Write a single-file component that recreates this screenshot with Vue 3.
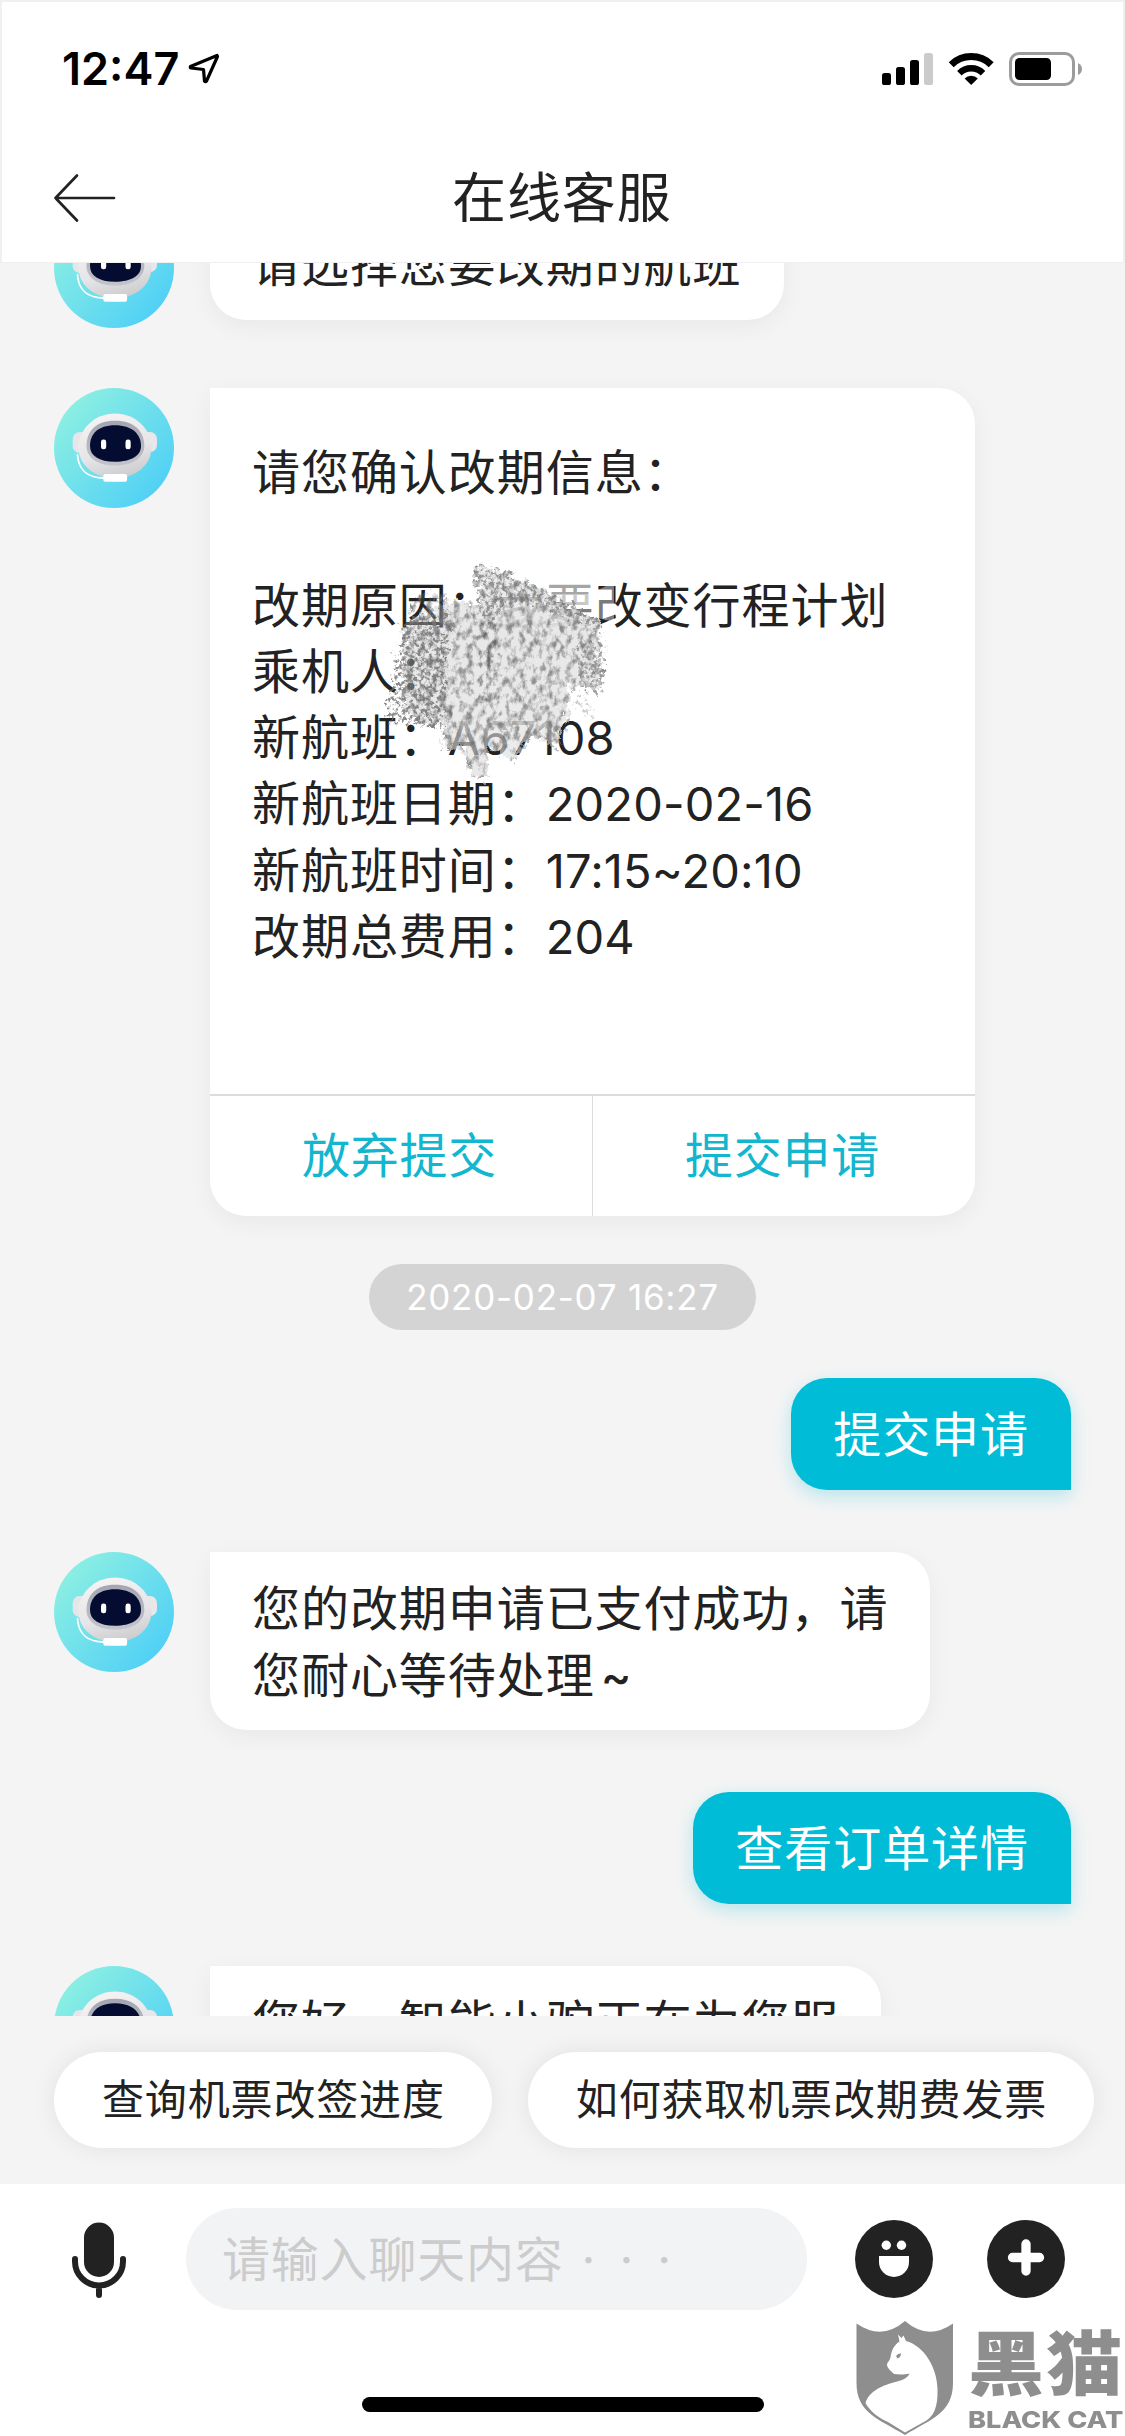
<script setup>
import { h } from 'vue'

const fields = [
  ['改期原因：我要改变行程计划', ''],
  ['乘机人：', ''],
  ['新航班：', 'A67108'],
  ['新航班日期：', '2020-02-16'],
  ['新航班时间：', '17:15~20:10'],
  ['改期总费用：', '204']
]
const quick = ['查询机票改签进度', '如何获取机票改期费发票']

const Avatar = () =>
  h('svg', { width: 120, height: 120, viewBox: '0 0 120 120', style: 'display:block;flex:none' }, [
    h('circle', { cx: 60, cy: 60, r: 60, fill: 'url(#sky)' }),
    h('rect', { x: 18.7, y: 44, width: 16, height: 21, rx: 7, fill: '#e6e6ea' }),
    h('rect', { x: 86.7, y: 44, width: 16.3, height: 20, rx: 7, fill: '#e9e7e9' }),
    h('path', {
      d: 'M61 25.5C82 25.5 97.5 42 97.5 59C97.5 77 82 90 61 90C40 90 24.5 77 24.5 59C24.5 42 40 25.5 61 25.5Z',
      fill: 'url(#shell)'
    }),
    h('path', {
      d: 'M61 32.7C80 32.7 90.3 43 90.3 58C90.3 70 78 77.5 61 77.5C44 77.5 32.5 70 32.5 58C32.5 43 42 32.7 61 32.7Z',
      fill: 'url(#rim)'
    }),
    h('path', {
      d: 'M61 37.3C78 37.3 87 46 87 58C87 68 77 73.7 61 73.7C45 73.7 36 68 36 58C36 46 44 37.3 61 37.3Z',
      fill: '#040d31'
    }),
    h('rect', { x: 47, y: 51.5, width: 5.2, height: 9.8, rx: 2.4, fill: '#fff' }),
    h('rect', { x: 71.5, y: 51.5, width: 5.2, height: 9.8, rx: 2.4, fill: '#fff' }),
    h('path', { d: 'M23.5 67C24.5 82 34 90 50 90', fill: 'none', stroke: '#fff', 'stroke-width': 1.8, 'stroke-linecap': 'round' }),
    h('rect', { x: 49.3, y: 86, width: 23.8, height: 7.7, rx: 2, fill: '#fff' })
  ])
</script>

<template>
  <div class="screen">
    <svg class="defs" width="0" height="0">
      <defs>
        <linearGradient id="sky" x1="0.1" y1="0.15" x2="0.9" y2="0.85">
          <stop offset="0" stop-color="#8cefe2" />
          <stop offset="1" stop-color="#50d0f6" />
        </linearGradient>
        <linearGradient id="shell" x1="0.3" y1="0" x2="0.6" y2="1">
          <stop offset="0" stop-color="#f6f3f3" />
          <stop offset="0.6" stop-color="#e6e5e7" />
          <stop offset="1" stop-color="#cccbce" />
        </linearGradient>
        <linearGradient id="rim" x1="0" y1="0" x2="0" y2="1">
          <stop offset="0" stop-color="#a3a6b2" />
          <stop offset="1" stop-color="#c3c4cb" />
        </linearGradient>
      </defs>
    </svg>

    <header class="top">
      <div class="status">
        <span class="clock">12:47</span>
        <svg class="loc" width="34" height="34" viewBox="0 0 34 34">
          <path d="M30 4.500L3.500 15.500Q2.800 16.500 4 17L16.500 18.500L17.500 30Q18.500 31.500 19.500 30L30.500 5.500Z" fill="none" stroke="#000" stroke-width="3.200" stroke-linejoin="round" />
        </svg>
        <svg class="signals" width="204" height="40" viewBox="0 0 204 40">
          <rect x="0" y="23" width="9" height="12" rx="2.600" />
          <rect x="14" y="17" width="9" height="18" rx="2.600" />
          <rect x="28" y="10" width="9" height="25" rx="2.600" />
          <rect x="42" y="3" width="9" height="32" rx="2.600" fill="#cbcbcb" />
          <g transform="translate(89.200 35)">
            <path d="M0 0L-6.600 -6.600A9.300 9.300 0 0 1 6.600 -6.600Z" />
            <path d="M-11.800 -11.800A16.700 16.700 0 0 1 11.800 -11.800" fill="none" stroke="#000" stroke-width="6.400" />
            <path d="M-20 -20.300A28.700 28.700 0 0 1 20 -20.300" fill="none" stroke="#000" stroke-width="7" />
          </g>
          <rect x="128.500" y="3.500" width="63" height="31" rx="8.500" fill="none" stroke="#9c9c9c" stroke-width="3" />
          <rect x="133" y="8" width="36" height="22" rx="4.500" />
          <path d="M196 13Q200 15 200 19Q200 23 196 25Z" fill="#9c9c9c" />
        </svg>
      </div>
      <div class="nav">
        <svg width="64" height="50" viewBox="0 0 64 50">
          <path d="M24 2.500L2.500 25L24 47.500M2.500 25H61" fill="none" stroke="#222" stroke-width="2.700" stroke-linecap="round" stroke-linejoin="round" />
        </svg>
        <h1>在线客服</h1>
      </div>
    </header>

    <main class="chat">
      <div class="thread">
        <div class="row">
          <Avatar />
          <div class="bubble">请选择您要改期的航班</div>
        </div>

        <div class="row">
          <Avatar />
          <div class="card">
            <div class="info">
              <p>请您确认改期信息：</p>
              <p>&nbsp;</p>
              <p v-for="f in fields" :key="f[0]">{{ f[0] }}<span class="latin">{{ f[1] }}</span></p>
              <svg class="scribble" width="280" height="260" viewBox="0 0 280 260">
                <defs>
                  <filter id="rough" x="-10%" y="-10%" width="120%" height="120%" color-interpolation-filters="sRGB">
                    <feTurbulence type="fractalNoise" baseFrequency="0.17" numOctaves="4" seed="4" result="n" />
                    <feDisplacementMap in="SourceGraphic" in2="n" scale="20" xChannelSelector="R" yChannelSelector="G" />
                  </filter>
                  <filter id="grain" x="0" y="0" width="100%" height="100%" color-interpolation-filters="sRGB">
                    <feTurbulence type="fractalNoise" baseFrequency="0.15 0.11" numOctaves="5" seed="9" />
                    <feColorMatrix values="0 0 0 0 0.42  0 0 0 0 0.42  0 0 0 0 0.42  3 0 0 0 -1.32" result="g" />
                    <feComposite in="g" in2="SourceGraphic" operator="in" />
                  </filter>
                  <filter id="coarse" x="0" y="0" width="100%" height="100%" color-interpolation-filters="sRGB">
                    <feTurbulence type="fractalNoise" baseFrequency="0.26" numOctaves="4" seed="21" />
                    <feColorMatrix values="0 0 0 0 0.46  0 0 0 0 0.46  0 0 0 0 0.46  5 0 0 0 -2.3" result="g" />
                    <feComposite in="g" in2="SourceGraphic" operator="in" />
                  </filter>
                  <linearGradient id="fade" x1="0" y1="0" x2="0" y2="1">
                    <stop offset="0" stop-color="#e4e4e4" stop-opacity="0.6" />
                    <stop offset="0.3" stop-color="#e6e6e6" stop-opacity="0.95" />
                    <stop offset="0.68" stop-color="#e8e8e8" stop-opacity="0.95" />
                    <stop offset="0.8" stop-color="#e0e0e0" stop-opacity="0.6" />
                    <stop offset="1" stop-color="#d8d8d8" stop-opacity="0.6" />
                  </linearGradient>
                </defs>
                <path d="M106 36L172 40L232 42L236 66L214 66L172 54L120 56Z" fill="#fff" fill-opacity="0.6" />
                <path d="M172 54H230L254 42L254 82L205 70Z" fill="#fff" fill-opacity="0.4" />
                <g filter="url(#rough)">
                  <path d="M88 60L122 66L114 30L122 24L172 44L205 64L246 84L234 96L246 104L236 118L244 128L240 150L212 146L208 174L196 206L172 196L152 222L128 206L126 240L112 236L102 206L82 210L88 120Z" fill="url(#fade)" />
                  <path d="M44 82L90 62L88 184L62 186L42 166Z" fill="#bdbdbd" fill-opacity="0.35" />
                </g>
                <g filter="url(#grain)">
                  <g filter="url(#rough)">
                    <path d="M88 60L122 66L114 30L122 24L172 44L205 64L246 84L234 96L246 104L236 118L244 128L240 150L212 146L208 174L196 206L172 196L152 222L128 206L126 240L112 236L102 206L82 210L88 120Z" fill-opacity="0.75" />
                    <path d="M44 84L58 52L90 58L90 184L62 186L42 165Z" fill-opacity="0.8" />
                    <path d="M118 60L136 60L134 170L116 160Z" />
                  </g>
                </g>
                <g filter="url(#coarse)">
                  <g filter="url(#rough)">
                    <path d="M42 84L90 68L86 120L84 188L60 186L24 180Z" fill-opacity="0.85" />
                    <path d="M114 26L127 24L187 50L246 86L242 94L190 70L150 60L128 88L118 70Z" fill-opacity="0.7" />
                    <path d="M216 100L248 104L240 156L222 148Z" fill-opacity="0.65" />
                    <path d="M212 160L222 155L238 182L230 182Z" fill-opacity="0.35" />
                    <path d="M182 194L200 190L200 212L190 206Z" fill-opacity="0.5" />
                  </g>
                </g>
              </svg>
            </div>
            <div class="actions">
              <span>放弃提交</span>
              <span>提交申请</span>
            </div>
          </div>
        </div>

        <div class="stamp">2020-02-07 16:27</div>

        <div class="bubble mine first">提交申请</div>

        <div class="row">
          <Avatar />
          <div class="bubble two">您的改期申请已支付成功，请<br />您耐心等待处理<i class="wave">~</i></div>
        </div>

        <div class="bubble mine">查看订单详情</div>

        <div class="row">
          <Avatar />
          <div class="bubble">您好，智能小驼正在为您服</div>
        </div>
      </div>
    </main>

    <div class="quick">
      <span v-for="q in quick" :key="q">{{ q }}</span>
    </div>

    <footer class="bar">
      <div class="controls">
        <svg class="mic" width="54" height="78" viewBox="0 0 54 78">
          <rect x="12" y="2.500" width="30" height="54.500" rx="15" fill="#222" />
          <path d="M3 39V41.500A24 24 0 0 0 51 41.500V39M27 66V75" fill="none" stroke="#222" stroke-width="6" stroke-linecap="round" />
        </svg>
        <div class="field">请输入聊天内容<span class="dots">···</span></div>
        <svg class="face" width="78" height="78" viewBox="0 0 78 78">
          <circle cx="39" cy="39" r="39" fill="#222" />
          <circle cx="31.300" cy="25.300" r="4.700" fill="#fff" />
          <circle cx="46.500" cy="25.300" r="4.700" fill="#fff" />
          <path d="M24 36H54V42A15 15 0 0 1 24 42Z" fill="#fff" />
        </svg>
        <svg width="78" height="78" viewBox="0 0 78 78">
          <circle cx="39" cy="39" r="39" fill="#222" />
          <path d="M39 24V51M25.500 37.500H52.500" stroke="#fff" stroke-width="9.300" stroke-linecap="round" />
        </svg>
      </div>
      <div class="home"></div>

      <div class="mark">
        <svg width="98" height="115" viewBox="0 0 98 115">
          <path d="M0.500 2.500Q26 20 49 0Q72 20 97 2.500V62C97 92 75 98 49 114C23 98 0.500 92 0.500 62Z" fill="#8f8e8e" />
          <path d="M42 13.500L45.500 17L47.500 14.500L50 20C68 25 81 46 81.500 68C82 86 78 97 66 102L49 111.500L32 101C22 97 13 89 9.500 82C13 70 27 64 41 60.500C49 58.500 52 56 53.500 52.500C47 54 42 53.500 38 53C35 50 31.500 47.500 31 44C31 41 34 40 34.500 36C35.500 29 38.500 23.500 43.500 20.500Z" fill="#fff" />
          <path d="M40 35Q42 32 45 32.500Q45 36 41.500 37.500Z" fill="#8f8e8e" />
        </svg>
        <div class="words">
          <b class="cn">黑猫</b>
          <b class="en">BLACK CAT</b>
        </div>
      </div>
    </footer>
  </div>
</template>

<style>
body {
  margin: 0;
  background: #fff;
}
</style>

<style scoped>
.screen {
  width: 1125px;
  height: 2436px;
  display: flex;
  flex-direction: column;
  overflow: hidden;
  background: #f4f4f4;
  color: #222;
  font-family: Inter, "Noto Sans CJK SC", sans-serif;
}
.defs {
  position: absolute;
}
.top {
  flex: none;
  height: 263px;
  box-sizing: border-box;
  background: #fff;
  border: 2px solid #f0f0f0;
  border-bottom: 1px solid #f0f0f0;
}
.status {
  height: 131px;
  display: flex;
  align-items: flex-start;
  box-sizing: border-box;
  padding: 40px 41px 0 60px;
}
.clock {
  font-size: 45px;
  line-height: 54px;
  font-weight: 600;
  width: 117px;
  color: #000;
  white-space: nowrap;
}
.loc {
  margin: 9px 0 0 8px;
}
.signals {
  margin: 8px -4px 0 auto;
}
.nav {
  height: 130px;
  display: flex;
  align-items: center;
  padding-left: 51px;
}
h1 {
  margin: 2px 0 0 335px;
  font-size: 54px;
  font-weight: 400;
  letter-spacing: 0.9px;
  line-height: 80px;
}
.chat {
  flex: none;
  height: 1753px;
  overflow: hidden;
}
.thread {
  display: flex;
  flex-direction: column;
  margin-top: -55px;
  padding: 0 54px;
}
.row {
  display: flex;
  align-items: flex-start;
  gap: 36px;
}
.row + .row {
  margin-top: 60px;
}
.bubble {
  height: 112px;
  box-sizing: border-box;
  padding: 24px 42px 0 42px;
  font-size: 48px;
  line-height: 66.5px;
  letter-spacing: 0.95px;
  white-space: nowrap;
  background: #fff;
  border-radius: 0 36px 36px 36px;
  box-shadow: 0 6px 24px rgba(0, 0, 0, 0.05);
}
.bubble.two {
  height: 178px;
}
.mine {
  align-self: flex-end;
  margin: 62px 0;
  color: #fff;
  background: #00bcd7;
  border-radius: 36px 36px 0 36px;
  box-shadow: 0 6px 18px rgba(0, 188, 215, 0.26);
}
.mine.first {
  margin-top: 48px;
}
.wave {
  font-style: normal;
  font-weight: 500;
  font-size: 46px;
  line-height: 0;
  margin-left: 6px;
}
.card {
  width: 765px;
  height: 828px;
  display: flex;
  flex-direction: column;
  background: #fff;
  border-radius: 0 36px 36px 36px;
  box-shadow: 0 6px 24px rgba(0, 0, 0, 0.05);
}
.info {
  position: relative;
  height: 706px;
  box-sizing: border-box;
  padding: 52px 42px 0;
  font-size: 48px;
  line-height: 66.3px;
  letter-spacing: 0.95px;
  white-space: nowrap;
}
.info p {
  margin: 0;
  height: 66.3px;
}
.latin {
  font-size: 47px;
  line-height: 0;
  letter-spacing: 0.15px;
}
.scribble {
  position: absolute;
  left: 150px;
  top: 152px;
}
.actions {
  flex: 1;
  display: flex;
  border-top: 2px solid #dcdcdc;
  color: #12b6cf;
}
.actions span {
  flex: 1;
  display: flex;
  align-items: center;
  justify-content: center;
  padding: 0 3px 8px 0;
  font-size: 48px;
  letter-spacing: 0.8px;
}
.actions span + span {
  border-left: 1px solid #dcdcdc;
}
.stamp {
  align-self: center;
  margin-top: 48px;
  width: 387px;
  height: 66px;
  line-height: 66px;
  border-radius: 33px;
  text-align: center;
  font-size: 35px;
  letter-spacing: 0.75px;
  color: #fff;
  background: #d4d4d4;
}
.quick {
  flex: none;
  height: 168px;
  box-sizing: border-box;
  padding: 36px 0 0 54px;
  display: flex;
  gap: 36px;
}
.quick span {
  height: 96px;
  line-height: 96px;
  padding: 0 47px 0 48px;
  border-radius: 48px;
  background: #fff;
  font-size: 42px;
  letter-spacing: 0.85px;
  white-space: nowrap;
  box-shadow: 0 0 24px rgba(0, 0, 0, 0.08);
}
.bar {
  flex: none;
  height: 252px;
  position: relative;
  background: #fff;
}
.controls {
  display: flex;
  align-items: center;
  height: 102px;
  padding: 24px 60px 0 72px;
}
.field {
  width: 621px;
  height: 102px;
  line-height: 103px;
  margin: 0 48px 0 60px;
  box-sizing: border-box;
  padding-left: 36px;
  border-radius: 51px;
  background: #f2f3f5;
  color: #ccc;
  font-size: 48px;
  letter-spacing: 0.8px;
  white-space: nowrap;
}
.dots {
  font-family: Inter, sans-serif;
  font-weight: 400;
  letter-spacing: 24px;
  margin-left: 18px;
}
.face {
  margin-right: 54px;
}
.home {
  width: 402px;
  height: 15px;
  margin: 87px 0 0 362px;
  border-radius: 8px;
  background: #000;
}
.mark {
  position: absolute;
  left: 856px;
  top: 137px;
  display: flex;
}
.words {
  display: flex;
  flex-direction: column;
  margin-left: 14px;
  color: #8f8e8e;
}
.cn {
  font-family: "Noto Sans CJK SC", sans-serif;
  font-weight: 900;
  font-size: 75px;
  line-height: 78px;
  height: 85px;
  letter-spacing: 2px;
  transform: scale(1.015, 0.94);
  transform-origin: 0 40%;
}
.en {
  font-family: Inter, sans-serif;
  font-weight: 800;
  font-size: 23.5px;
  line-height: 28px;
  white-space: nowrap;
  width: max-content;
  transform: scaleX(1.155);
  transform-origin: 0 50%;
}
</style>
